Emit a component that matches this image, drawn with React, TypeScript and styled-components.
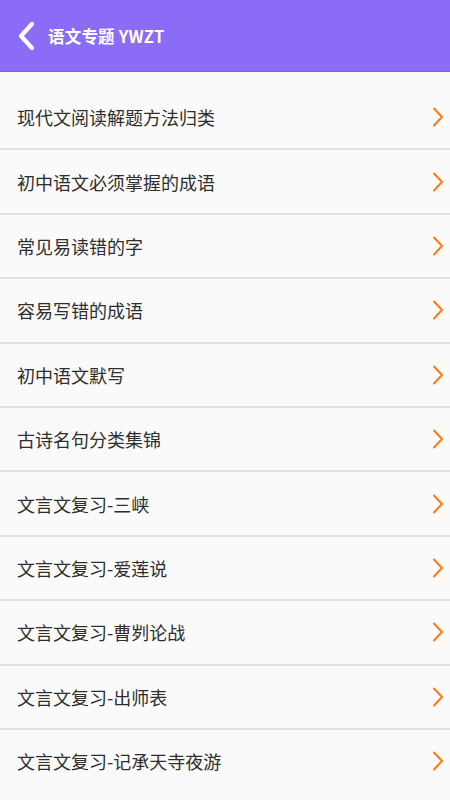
import styled, { createGlobalStyle } from "styled-components";

const GlobalStyle = createGlobalStyle`
  html, body {
    margin: 0;
    padding: 0;
    background: #fafafa;
  }
  body {
    font-family: "Noto Sans CJK SC", "Noto Sans", sans-serif;
  }
`;

const Page = styled.div`
  width: 450px;
  min-height: 800px;
  background: #fafafa;
`;

const Header = styled.header`
  display: flex;
  align-items: center;
  height: 72px;
  padding: 0 0 0 15px;
  box-sizing: border-box;
  background: #8b6cf6;
  border-bottom: 1px solid #7c5ee6;
`;

const BackButton = styled.button`
  display: flex;
  align-items: center;
  justify-content: center;
  width: 24px;
  height: 32px;
  padding: 0;
  margin-right: 9px;
  background: none;
  border: none;
`;

const HeaderTitle = styled.h1`
  margin: 0;
  font-size: 16.5px;
  font-weight: 700;
  color: #ffffff;
  letter-spacing: 0.2px;
`;

const List = styled.ul`
  list-style: none;
  margin: 0;
  padding: 14px 0 0;
`;

const Row = styled.li`
  display: flex;
  align-items: center;
  justify-content: space-between;
  height: 62.4px;
  padding: 0 6px 0 17px;
  border-bottom: 2px solid #e2e2e2;

  &:last-child {
    border-bottom: none;
  }
`;

const RowLabel = styled.span`
  font-size: 18px;
  color: #2e2e2e;
`;

const Chevron = () => (
  <svg width="12" height="20" viewBox="0 0 12 20">
    <path d="M2 1.5 L10 10 L2 18.5" fill="none" stroke="#ff7a12" strokeWidth="2" strokeLinecap="round" strokeLinejoin="round" />
  </svg>
);

const items = [
  "现代文阅读解题方法归类",
  "初中语文必须掌握的成语",
  "常见易读错的字",
  "容易写错的成语",
  "初中语文默写",
  "古诗名句分类集锦",
  "文言文复习-三峡",
  "文言文复习-爱莲说",
  "文言文复习-曹刿论战",
  "文言文复习-出师表",
  "文言文复习-记承天寺夜游",
];

export default function App() {
  return (
    <Page>
      <GlobalStyle />
      <Header>
        <BackButton>
          <svg width="20" height="30" viewBox="0 0 20 30">
            <path d="M15 3 L4 15 L15 27" fill="none" stroke="#ffffff" strokeWidth="4.2" strokeLinecap="round" strokeLinejoin="round" />
          </svg>
        </BackButton>
        <HeaderTitle>语文专题 YWZT</HeaderTitle>
      </Header>
      <List>
        {items.map((item) => (
          <Row key={item}>
            <RowLabel>{item}</RowLabel>
            <Chevron />
          </Row>
        ))}
      </List>
    </Page>
  );
}
